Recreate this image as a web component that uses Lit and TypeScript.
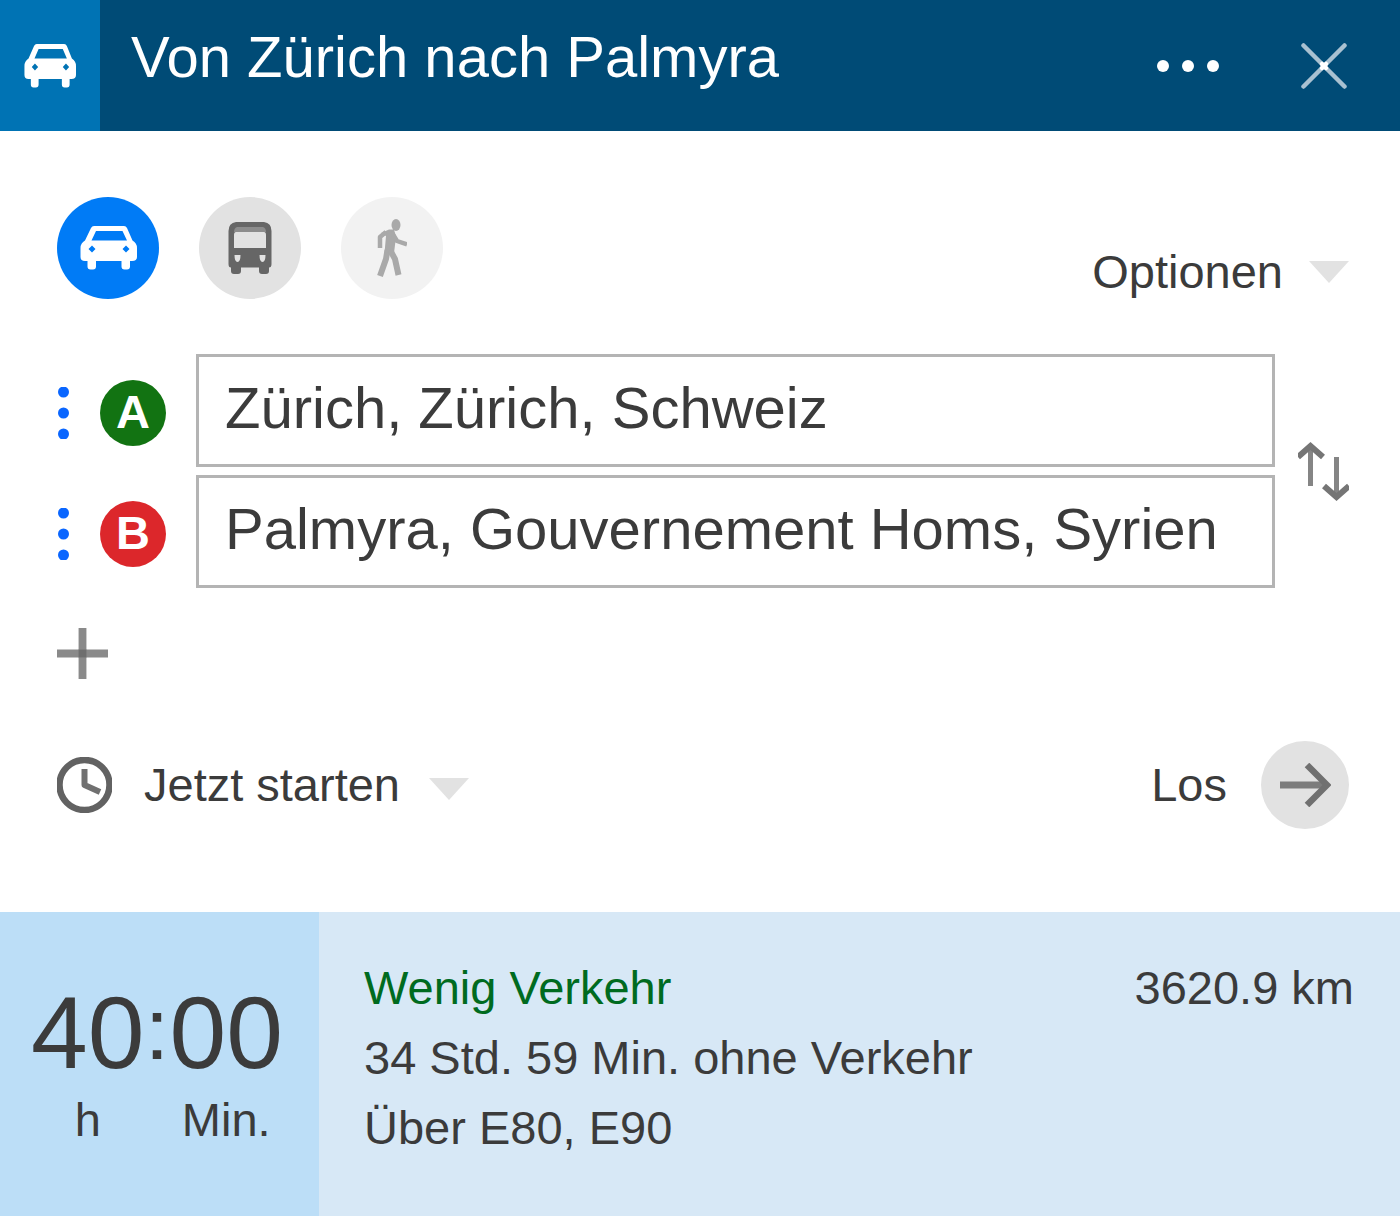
import { LitElement, html, css, svg } from "lit";
import { customElement, state } from "lit/decorators.js";
import { classMap } from "lit/directives/class-map.js";

type Mode = "car" | "bus" | "walk";

const carShape = svg`<path fill="currentColor" fill-rule="evenodd" d="M14 0H44Q46 0 47 2L52.500 14.500Q57 17 57 22V31Q57 35 52 35H50V40.500Q50 43.500 47 43.500H44.500Q41.500 43.500 41.500 40.500V35H16V40.500Q16 43.500 13 43.500H10.500Q7.500 43.500 7.500 40.500V35H5Q0.500 35 0.500 31V22Q0.500 17 5 14.500L11 2Q12 0 14 0ZM16 5L11.500 14.500H47L42.500 5ZM12 19.500L8.500 23L12 26.500L15.500 23ZM46 19.500L42.500 23L46 26.500L49.500 23Z"/>`;

const busShape = svg`
  <path fill="#666" fill-rule="evenodd" d="M8 0H36Q43.500 1 43.500 9V42Q43.500 45.500 41 45.500V49Q41 52 38 52H34Q31 52 31 49V45.500H13V49Q13 52 10 52H6Q3 52 3 49V45.500Q0.500 45.500 0.500 42V9Q0.500 1 8 0ZM8 10Q6 10 6 13V26H38V13Q38 10 36 10ZM6.500 33Q6.500 40 9.500 40Q12.500 40 12.500 33ZM31.500 33Q31.500 40 34.500 40Q37.500 40 37.500 33Z"/>
  <path fill="#8c8c8c" d="M9 5H35Q38 6 38 10H6Q6 6 9 5Z"/>`;

const walkShape = svg`
  <ellipse cx="19" cy="6" rx="4.500" ry="6" fill="#a9a9a9"/>
  <path fill="#a9a9a9" d="M4 14L12 10.500H17L19 18L17 34H7.500L9 17Z"/>
  <path fill="none" stroke="#a9a9a9" stroke-width="4.500" stroke-linejoin="round" d="M9 13L3 18V29M14.500 13L20 22L30 25.500"/>
  <path fill="none" stroke="#a9a9a9" stroke-width="6" d="M10.500 31L9 40L3 57"/>
  <path fill="none" stroke="#a9a9a9" stroke-width="6" d="M13 31L18 40L21.500 56"/>`;

@customElement("app-root")
export class AppRoot extends LitElement {
  static styles = css`
    :host {
      display: flex;
      flex-direction: column;
      min-height: 100vh;
      background: #fff;
      color: #3b3b3b;
      font-family: "Liberation Sans", Arial, sans-serif;
      font-size: 47px;
      line-height: 54px;
    }
    button,
    input,
    select {
      font: inherit;
      color: inherit;
      margin: 0;
      padding: 0;
      border: 0;
      border-radius: 0;
      background: none;
    }
    button {
      display: flex;
      align-items: center;
      cursor: pointer;
    }
    svg {
      display: block;
      flex: none;
    }
    .header {
      display: flex;
      min-height: 131px;
      background: #004b76;
      color: #fff;
    }
    .tab {
      display: flex;
      align-items: center;
      justify-content: center;
      width: 100px;
      background: #0073b4;
    }
    .title {
      flex: 1;
      margin: 0;
      padding: 24px 0 0 31px;
      font-size: 58px;
      font-weight: normal;
      line-height: 66px;
    }
    .tools {
      display: flex;
      gap: 80px;
      padding-right: 53px;
    }
    .panel {
      display: flex;
      flex-direction: column;
      padding: 66px 51px 83px 57px;
    }
    .bar {
      display: flex;
      justify-content: space-between;
      align-items: flex-end;
    }
    .modes {
      display: flex;
      gap: 40px;
    }
    .mode {
      justify-content: center;
      width: 102px;
      height: 102px;
      border-radius: 50%;
      background: #e2e2e2;
    }
    .mode.active {
      background: #007bf6;
      color: #fff;
    }
    .mode.muted {
      background: #f2f2f2;
    }
    .options {
      gap: 26px;
    }
    .route {
      display: flex;
      align-items: center;
      gap: 23px;
      margin-top: 55px;
    }
    .stops {
      flex: 1;
      min-width: 0;
      display: flex;
      flex-direction: column;
      gap: 8px;
    }
    .stop {
      display: flex;
      align-items: center;
      gap: 30px;
    }
    .marker {
      display: flex;
      align-items: center;
      gap: 30px;
      padding-top: 4px;
    }
    .badge {
      width: 66px;
      height: 66px;
      border-radius: 50%;
      color: #fff;
      font-weight: bold;
      font-size: 47px;
      line-height: 64px;
      text-align: center;
    }
    .start {
      background: #127312;
    }
    .end {
      background: #dc272b;
    }
    .field {
      flex: 1;
      min-width: 0;
      box-sizing: border-box;
      border: 3px solid #b4b4b4;
      padding: 17px 26px 24px;
      font-size: 58px;
      line-height: 66px;
      height: 113px;
      background: #fff;
    }
    .add {
      align-self: flex-start;
      margin-top: 40px;
    }
    .departure {
      align-items: center;
      margin-top: 62px;
    }
    .when {
      display: flex;
      align-items: center;
      gap: 32px;
    }
    .choice {
      display: flex;
      align-items: center;
      gap: 29px;
    }
    .choice select {
      appearance: none;
    }
    .choice svg {
      margin-top: 8px;
    }
    .go {
      gap: 34px;
    }
    .go-circle {
      display: flex;
      align-items: center;
      justify-content: center;
      width: 88px;
      height: 88px;
      border-radius: 50%;
      background: #e2e2e2;
    }
    .result {
      flex: 1;
      display: flex;
      background: #d7e8f6;
      line-height: 70px;
    }
    .time {
      box-sizing: border-box;
      display: grid;
      grid-template-columns: auto 25px auto;
      align-content: start;
      justify-content: center;
      justify-items: center;
      width: 319px;
      padding: 70px 5px 0 0;
      background: #bcdef7;
    }
    .digits {
      font-size: 102px;
      line-height: 103px;
    }
    .colon {
      font-size: 88px;
      line-height: 94px;
    }
    .minutes {
      grid-column: 3;
    }
    .details {
      flex: 1;
      display: flex;
      justify-content: space-between;
      padding: 41px 46px 41px 45px;
    }
    .details p {
      margin: 0;
    }
    .details .traffic {
      color: #006b1f;
    }
  `;

  @state() private mode: Mode = "car";

  private caret() {
    return html`<svg width="40" height="22" viewBox="0 0 40 22" aria-hidden="true">
      <path fill="#e2e2e2" d="M0 0H40L20 22Z" />
    </svg>`;
  }

  private stop(letter: string, kind: string, name: string, value: string) {
    return html`<div class="stop">
      <div class="marker">
        <svg width="13" height="52" viewBox="0 0 13 52" fill="#0a66ff" aria-hidden="true">
          <circle cx="6.500" cy="5" r="5.500" />
          <circle cx="6.500" cy="26" r="5.500" />
          <circle cx="6.500" cy="47" r="5.500" />
        </svg>
        <span class="badge ${kind}">${letter}</span>
      </div>
      <input class="field" type="text" aria-label=${name} .value=${value} />
    </div>`;
  }

  private modeButton(mode: Mode, name: string, icon: unknown) {
    return html`<button
      class=${classMap({ mode: true, active: this.mode === mode, muted: mode === "walk" })}
      aria-label=${name}
      aria-pressed=${this.mode === mode}
      @click=${() => (this.mode = mode)}
    >
      ${icon}
    </button>`;
  }

  render() {
    return html`
      <header class="header">
        <div class="tab">
          <svg width="52" height="44" viewBox="0 0 57 44" preserveAspectRatio="none" aria-hidden="true">${carShape}</svg>
        </div>
        <h1 class="title">Von Zürich nach Palmyra</h1>
        <div class="tools">
          <button aria-label="Mehr">
            <svg width="66" height="16" viewBox="0 0 66 16" fill="#fff">
              <circle cx="8" cy="8" r="6" />
              <circle cx="33" cy="8" r="6" />
              <circle cx="58" cy="8" r="6" />
            </svg>
          </button>
          <button aria-label="Schließen">
            <svg width="46" height="46" viewBox="0 0 46 46" fill="none" stroke="#a9c1d1" stroke-width="4.500" stroke-linecap="round">
              <path d="M2.500 2.500L43.500 43.500M43.500 2.500L2.500 43.500" />
              <path stroke="#fff" d="M21 21L25 25M25 21L21 25" />
            </svg>
          </button>
        </div>
      </header>

      <main class="panel">
        <div class="bar">
          <div class="modes">
            ${this.modeButton("car", "Auto", html`<svg width="57" height="44" viewBox="0 0 57 44">${carShape}</svg>`)}
            ${this.modeButton("bus", "Bus", html`<svg width="44" height="52" viewBox="0 0 44 52">${busShape}</svg>`)}
            ${this.modeButton("walk", "Zu Fuß", html`<svg width="30" height="58" viewBox="0 0 30 58">${walkShape}</svg>`)}
          </div>
          <button class="options">Optionen ${this.caret()}</button>
        </div>

        <div class="route">
          <div class="stops">
            ${this.stop("A", "start", "Start", "Zürich, Zürich, Schweiz")}
            ${this.stop("B", "end", "Ziel", "Palmyra, Gouvernement Homs, Syrien")}
          </div>
          <button aria-label="Start und Ziel tauschen">
            <svg width="51" height="59" viewBox="0 0 51 59" fill="none" stroke="#858585" stroke-width="5">
              <path d="M12.500 2V44M38.500 15V57" />
              <path stroke="#757575" stroke-width="6" d="M0 15L12.500 4L25 15M26 44L38.500 55L51 44" />
            </svg>
          </button>
        </div>

        <button class="add" aria-label="Ziel hinzufügen">
          <svg width="51" height="51" viewBox="0 0 52 52">
            <path fill="#8a8a8a" d="M22 0H30V22H52V30H30V52H22V30H0V22H22Z" />
            <path fill="#6e6e6e" d="M22 22H30V30H22Z" />
          </svg>
        </button>

        <div class="bar departure">
          <div class="when">
            <svg width="55" height="56" viewBox="0 0 55 56" fill="none" stroke="#626262" aria-hidden="true">
              <circle cx="27.500" cy="28" r="25" stroke-width="6.500" />
              <path stroke="#707070" stroke-width="6" stroke-linejoin="round" d="M27.500 12V28L43 35" />
            </svg>
            <div class="choice">
              <select aria-label="Abfahrt">
                <option>Jetzt starten</option>
              </select>
              ${this.caret()}
            </div>
          </div>
          <button class="go">
            Los
            <span class="go-circle">
              <svg width="52" height="44" viewBox="0 0 52 44" fill="none" aria-hidden="true">
                <path stroke="#7c7c7c" stroke-width="7" d="M1 22H46" />
                <path stroke="#707070" stroke-width="6.500" d="M28 2L48 22L28 42" />
              </svg>
            </span>
          </button>
        </div>
      </main>

      <section class="result">
        <div class="time">
          <span class="digits">40</span>
          <span class="colon">:</span>
          <span class="digits">00</span>
          <span>h</span>
          <span class="minutes">Min.</span>
        </div>
        <div class="details">
          <div>
            <p class="traffic">Wenig Verkehr</p>
            <p>34 Std. 59 Min. ohne Verkehr</p>
            <p>Über E80, E90</p>
          </div>
          <p>3620.9 km</p>
        </div>
      </section>
    `;
  }
}
